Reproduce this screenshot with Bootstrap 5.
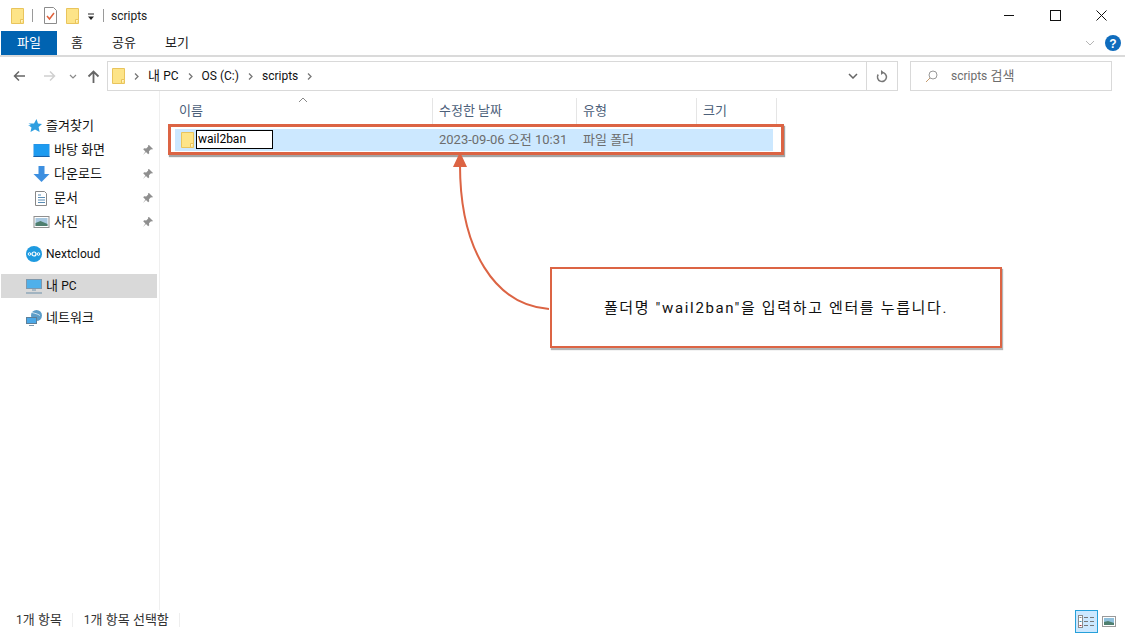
<!DOCTYPE html>
<html lang="ko"><head><meta charset="utf-8"><title>scripts</title>
<link href="https://cdn.jsdelivr.net/npm/bootstrap@5.3.0/dist/css/bootstrap.min.css" rel="stylesheet">
<style>
html,body{margin:0;height:634px;overflow:hidden;background:#fff}
body{font:13px/16px Roboto,"Noto Sans CJK KR",sans-serif;color:#111;width:1125px;position:relative}
svg{display:block;flex:none}
.lt{font-size:12px}
.titlebar{height:31px;padding-left:11px}
.qsep{width:1px;height:13px;background:#9a9a9a}
.wbtns{margin-left:auto;margin-right:1px}
.wbtn{width:46px;height:30px;display:flex;align-items:center;justify-content:center}
.ribbon{border-bottom:2px solid #dadada;height:26px;padding-left:1px}
.rtab{height:24px;display:flex;align-items:center;justify-content:center;color:#222}
.rtab-on{width:56px;background:#0063b1;color:#fff}
.addr{height:30px;margin-top:4px}
.nav-zone{width:107px;flex:none;padding-left:13px}
.abox{width:791px;height:30px;border:1px solid #d9d9d9;flex:none}
.crumbs{padding-left:4px;flex:1}
.chev{margin:0 9px}
.refresh{width:31px;height:28px;border-left:1px solid #d9d9d9;display:flex;align-items:center;justify-content:center}
.sbox{width:202px;height:30px;border:1px solid #d9d9d9;margin-left:12px;padding-left:14px;color:#6d6d6d;flex:none}
.main{height:519px}
.side{width:160px;flex:none;border-right:1px solid #efefef;padding-top:23px;padding-left:1px}
.sitem{height:24px;display:flex;align-items:center;width:156px;position:relative}
.lvl1{padding-left:25px}.lvl2{padding-left:32px}
.lvl1 svg{margin-right:4px}
.ic{margin-right:4px}
.pin{position:absolute;left:141px;top:6px;margin:0!important}
.gap8{margin-top:8px}
.son{background:#d9d9d9}
.list{flex:1;position:relative}
.hdr{height:33px;padding-top:7px}
.hcol{height:26px;color:#4c607a;border-right:1px solid #e5e5e5;padding-left:6px;display:flex;align-items:center;flex:none}
.row-sel{margin-left:15px;width:598px;height:22px;background:#cce8ff;margin-top:5px;padding-bottom:1px}
.rn{width:257px;padding-left:6px;flex:none}
.rename{width:77px;height:19px;border:1px solid #000;background:#fff;margin-left:2px;line-height:17px;padding-left:1px;color:#000;flex:none}
.rd{width:144px;color:#6d6d6d;flex:none;margin-left:7px}
.rt{color:#6d6d6d}
.status{height:24px;padding-left:16px;color:#333;position:relative}
.stx{height:20px;line-height:20px}
.ssep{width:1px;height:14px;background:#eee;margin:3px 11px 0 10px}
.views{margin-left:auto;margin-right:9px;gap:4px}
.vbtn{width:23px;height:23px;background:#cce8ff;border:1px solid #26a0da;display:flex;align-items:center;justify-content:center}
.marker{position:absolute;left:168px;top:124px;width:616px;height:31px;border:3px solid #dc6444;box-shadow:1px 2px 1px rgba(90,90,90,.55)}
.callout{position:absolute;left:550px;top:267px;width:452px;height:81px;border:2px solid #dc6444;background:#fff;box-shadow:1px 2px 1px rgba(90,90,90,.45);display:flex;align-items:center;justify-content:center;font-size:15px;letter-spacing:1.650px;color:#111;padding-top:1px;white-space:pre}
.arrow{position:absolute;left:0;top:0;pointer-events:none}
.sorter{position:absolute;left:298px;top:97px}
</style></head><body>

<svg width="0" height="0" class="position-absolute"><defs>
<symbol id="folder" viewBox="0 0 13 16"><path d="M.5.5h12v15H.5z" fill="#fde488" stroke="#e9c45c"/><path d="M9.5 15.5v-4h3" fill="#fff3c4" stroke="#e9c45c"/></symbol>
<symbol id="pinic" viewBox="0 0 12 12"><path d="M7 1l4 4-1 .6-1-.3-2 2 .2 2-1 1-2.200-2.300L1 11l2.400-3.500L1.200 5.300l1-1 2 .2 2-2-.3-1z" fill="#8f8f8f"/></symbol>
<symbol id="chevic" viewBox="0 0 5 7"><path d="M1 .5l3 3-3 3" fill="none" stroke="#777" stroke-width="1.300"/></symbol>
</defs></svg>

<div class="titlebar d-flex align-items-center">
  <svg width="13" height="16"><use href="#folder"/></svg>
  <span class="qsep" style="margin:0 11px 0 8px"></span>
  <svg width="13" height="17" viewBox="0 0 13 17"><path d="M.5.500h9l3 3v13H.5z" fill="#fff" stroke="#8c8c8c"/><path d="M3 9l2.500 3L10 6" fill="none" stroke="#e0603a" stroke-width="1.500"/></svg>
  <span style="width:9px"></span>
  <svg width="13" height="16"><use href="#folder"/></svg>
  <svg width="8" height="8" viewBox="0 0 8 8" style="margin:2px 8px 0 8px"><path d="M1 1h6" stroke="#222"/><path d="M1 3.500h6L4 7z" fill="#222"/></svg>
  <span class="qsep"></span>
  <span class="lt" style="color:#222;margin-left:7px">scripts</span>
  <div class="wbtns d-flex">
    <div class="wbtn"><svg width="11" height="11"><path d="M0 5.500h10" stroke="#111"/></svg></div>
    <div class="wbtn"><svg width="11" height="11"><rect x=".5" y=".5" width="10" height="10" fill="none" stroke="#111"/></svg></div>
    <div class="wbtn"><svg width="11" height="11"><path d="M.5.500l10 10M10.500.500l-10 10" stroke="#111"/></svg></div>
  </div>
</div>

<div class="ribbon d-flex">
  <div class="rtab rtab-on">파일</div>
  <div class="rtab" style="margin-left:14px;width:12px">홈</div>
  <div class="rtab" style="margin-left:29px;width:24px">공유</div>
  <div class="rtab" style="margin-left:29px;width:24px">보기</div>
  <div class="ms-auto d-flex align-items-center" style="margin-right:4px;gap:10px;height:24px">
    <svg width="10" height="6" viewBox="0 0 10 6"><path d="M1 1l4 4 4-4" fill="none" stroke="#b5b5b5"/></svg>
    <svg width="16" height="16" viewBox="0 0 16 16"><circle cx="8" cy="8" r="8" fill="#0f6cbd"/><text x="8" y="12.500" text-anchor="middle" font-size="12" font-weight="700" fill="#fff" font-family="Liberation Sans">?</text></svg>
  </div>
</div>

<div class="addr d-flex align-items-center">
  <div class="nav-zone d-flex align-items-center">
    <svg width="13" height="12" viewBox="0 0 13 12"><path d="M12 6H2M6 1.500L1.500 6 6 10.500" fill="none" stroke="#666" stroke-width="1.500"/></svg>
    <svg width="13" height="12" viewBox="0 0 13 12" style="margin-left:17px"><path d="M1 6h10M7 1.500L11.500 6 7 10.500" fill="none" stroke="#d0d0d0" stroke-width="1.500"/></svg>
    <svg width="8" height="5" viewBox="0 0 8 5" style="margin-left:13px"><path d="M1 1l3 3 3-3" fill="none" stroke="#8a8a8a" stroke-width="1.200"/></svg>
    <svg width="13" height="13" viewBox="0 0 13 13" style="margin-left:10px"><path d="M6.500 13V2M1.500 6.500l5-5 5 5" fill="none" stroke="#666" stroke-width="1.800"/></svg>
  </div>
  <div class="abox d-flex align-items-center">
    <div class="crumbs d-flex align-items-center">
      <svg width="13" height="16"><use href="#folder"/></svg>
      <svg class="chev" width="5" height="7"><use href="#chevic"/></svg><span>내 <span class="lt">PC</span></span>
      <svg class="chev" width="5" height="7"><use href="#chevic"/></svg><span class="lt">OS (C:)</span>
      <svg class="chev" width="5" height="7"><use href="#chevic"/></svg><span class="lt">scripts</span>
      <svg class="chev" width="5" height="7"><use href="#chevic"/></svg>
    </div>
    <svg width="10" height="6" viewBox="0 0 10 6" style="margin-right:8px"><path d="M1 1l4 4 4-4" fill="none" stroke="#666" stroke-width="1.500"/></svg>
    <div class="refresh"><svg width="12" height="13" viewBox="0 0 12 13"><path d="M6 2.500a4.500 4.500 0 1 1-3.800 2" fill="none" stroke="#777" stroke-width="1.500"/><path d="M5 0v5l3-2.500z" fill="#777"/></svg></div>
  </div>
  <div class="sbox d-flex align-items-center">
    <svg width="13" height="13" viewBox="0 0 13 13" style="margin-right:13px"><circle cx="8" cy="5" r="4" fill="none" stroke="#999"/><path d="M5 8l-4 4" stroke="#c49a6c"/></svg>
    <span><span class="lt">scripts</span> 검색</span>
  </div>
</div>

<div class="main d-flex">
  <div class="side">
    <div class="sitem lvl1"><svg width="14" height="14" viewBox="0 0 14 14" style="margin-left:2px"><path d="M8.500 0l1.500 4.500L14 5l-3.400 3 1 5L7 10.400 2.500 13l1-4.500L1.500 7l-1.500-.5 3-.500-2.500-1.500h5L6 4.500z" fill="#2f9fe0"/></svg><span>즐겨찾기</span></div>
    <div class="sitem lvl2"><svg class="ic" width="17" height="13" viewBox="0 0 16 13"><rect width="16" height="13" fill="#2a8fe0"/><rect x=".5" y=".5" width="15" height="11" fill="#1d9bf0"/><path d="M0 12.500h16" stroke="#155fa8"/></svg><span>바탕 화면</span><svg class="pin" width="12" height="12"><use href="#pinic"/></svg></div>
    <div class="sitem lvl2"><svg class="ic" width="17" height="16" viewBox="0 0 16 16"><path d="M5 0h6v8h5l-8 8-8-8h5z" fill="#3d8fe0"/></svg><span>다운로드</span><svg class="pin" width="12" height="12"><use href="#pinic"/></svg></div>
    <div class="sitem lvl2"><svg class="ic" width="17" height="15" viewBox="0 0 17 15"><path d="M2.500.500h9l2 2v12h-11z" fill="#fff" stroke="#888"/><path d="M5 4h3M5 6.500h7M5 9h7M5 11.500h7" stroke="#5a8db5"/></svg><span>문서</span><svg class="pin" width="12" height="12"><use href="#pinic"/></svg></div>
    <div class="sitem lvl2"><svg class="ic" width="17" height="12" viewBox="0 0 16 12"><rect x=".5" y=".5" width="15" height="11" fill="#fff" stroke="#8f8f8f"/><rect x="2" y="2" width="12" height="8" fill="#a8c8e0"/><path d="M2 7l5-2 7 3v2H2z" fill="#4f7f6f"/></svg><span>사진</span><svg class="pin" width="12" height="12"><use href="#pinic"/></svg></div>
    <div class="sitem lvl1 gap8"><svg width="16" height="16" viewBox="0 0 16 16"><circle cx="8" cy="8" r="8" fill="#1e9ae0"/><circle cx="8" cy="8" r="2" fill="none" stroke="#fff" stroke-width="1.200"/><circle cx="3.500" cy="8" r="1.300" fill="none" stroke="#fff"/><circle cx="12.500" cy="8" r="1.300" fill="none" stroke="#fff"/></svg><span class="lt">Nextcloud</span></div>
    <div class="sitem lvl1 son gap8"><svg width="16" height="15" viewBox="0 0 16 15"><rect x=".5" y=".5" width="15" height="9" fill="#4fb0ea" stroke="#7d98ad"/><path d="M6 10h4v2H6z" fill="#a7b7c3"/><path d="M0 14h16" stroke="#8fa7b8" stroke-width="1.500"/></svg><span>내 <span class="lt">PC</span></span></div>
    <div class="sitem lvl1 gap8"><svg width="16" height="16" viewBox="0 0 16 16"><circle cx="10.500" cy="5.500" r="5.500" fill="#5c9dc8"/><path d="M6 2.500c3 1 5 1 8 3" stroke="#cfe4f2" fill="none"/><rect x=".5" y="7.500" width="10" height="6" fill="#4aa8e8" stroke="#5d7f98"/><path d="M3 15.500h5" stroke="#7d98ad"/></svg><span>네트워크</span></div>
  </div>
  <div class="list">
    <div class="hdr d-flex">
      <div class="hcol" style="width:273px;padding-left:19px">이름</div>
      <div class="hcol" style="width:144px">수정한 날짜</div>
      <div class="hcol" style="width:120px">유형</div>
      <div class="hcol" style="width:80px">크기</div>
    </div>
    <div class="row-sel d-flex align-items-center">
      <div class="rn d-flex align-items-center"><svg width="13" height="16"><use href="#folder"/></svg><span class="rename lt">wail2ban</span></div>
      <div class="rd">2023-09-06 오전 10:31</div>
      <div class="rt">파일 폴더</div>
    </div>
  </div>
</div>

<div class="status d-flex align-items-start">
  <span class="stx"><span class="lt">1</span>개 항목</span><span class="ssep"></span><span class="stx"><span class="lt">1</span>개 항목 선택함</span><span class="ssep"></span>
  <div class="views d-flex align-items-center">
    <div class="vbtn"><svg width="17" height="13" viewBox="0 0 17 13"><rect x=".5" y=".5" width="4" height="12" fill="#fff" stroke="#8a8a8a"/><path d="M1.500 2.500h2" stroke="#888"/><path d="M1.500 6.500h2" stroke="#3f8fb0"/><path d="M1.500 10.500h2" stroke="#a03040"/><path d="M6 2.500h4M12 2.500h4M6 6.500h4M12 6.500h4M6 10.500h4M12 10.500h4" stroke="#777"/></svg></div>
    <svg width="14" height="11" viewBox="0 0 14 11"><rect x=".5" y=".5" width="13" height="10" fill="#fff" stroke="#9a9a9a"/><rect x="2" y="2" width="10" height="7" fill="#8fc0dc"/><path d="M2 6l4-1 6 2v2H2z" fill="#4f7f6f"/></svg>
  </div>
</div>

<svg class="sorter" width="10" height="6" viewBox="0 0 10 6"><path d="M1 5l4-4 4 4" fill="none" stroke="#888"/></svg>
<div class="marker"></div>
<svg class="arrow" width="1125" height="634" viewBox="0 0 1125 634"><path d="M549 309C495 305 460 250 460 165" fill="none" stroke="#dc6444" stroke-width="2"/><path d="M460 152l7 15h-14z" fill="#dc6444"/></svg>
<div class="callout">폴더명 "wail2ban"을 입력하고 엔터를 누릅니다.</div>
</body></html>
